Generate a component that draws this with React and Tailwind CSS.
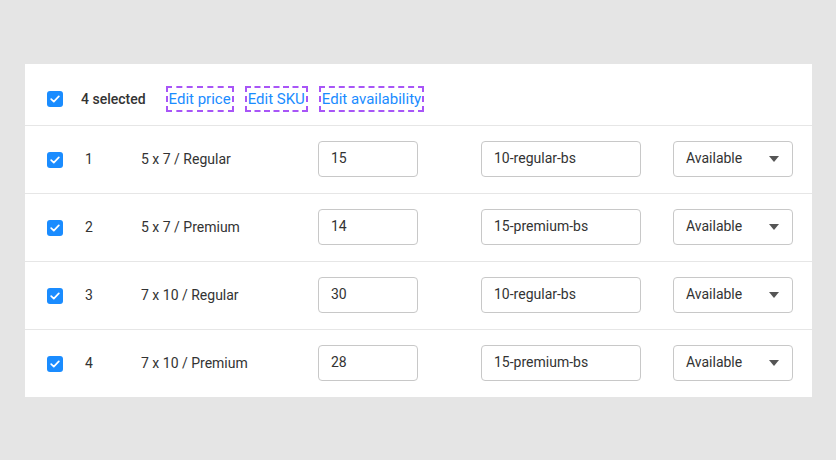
const rows = [
  { id: 1, name: "5 x 7 / Regular", price: "15", sku: "10-regular-bs" },
  { id: 2, name: "5 x 7 / Premium", price: "14", sku: "15-premium-bs" },
  { id: 3, name: "7 x 10 / Regular", price: "30", sku: "10-regular-bs" },
  { id: 4, name: "7 x 10 / Premium", price: "28", sku: "15-premium-bs" },
];

function Check() {
  return (
    <span className="w-4 h-4 rounded-[3px] bg-[#1a8cff] flex items-center justify-center shrink-0">
      <svg width="10" height="8" viewBox="0 0 10 8" fill="none">
        <path d="M1.2 4.2 L3.8 6.6 L8.8 1.4" stroke="white" strokeWidth="1.7" strokeLinecap="round" strokeLinejoin="round" />
      </svg>
    </span>
  );
}

function ActionButton({ children }) {
  return (
    <button className="h-[26px] px-[3px] outline-2 outline-dashed outline-[#a855f7] -outline-offset-2 text-[#1a8cff] text-[15px] leading-none">
      {children}
    </button>
  );
}

export default function App() {
  return (
    <div className="min-h-[460px] bg-[#e5e5e5] pt-16 pl-[25px] pr-6" style={{ fontFamily: "Roboto, 'Liberation Sans', sans-serif" }}>
      <div className="w-[787px] bg-white">
        <div className="h-[62px] flex items-center pt-[9px] pl-[22px] border-b border-[#e6e6e6]">
          <Check />
          <span className="ml-[18px] text-[14px] font-medium text-[#333]">4 selected</span>
          <div className="ml-[20px] flex items-center gap-[11px]">
            <ActionButton>Edit price</ActionButton>
            <ActionButton>Edit SKU</ActionButton>
            <ActionButton>Edit availability</ActionButton>
          </div>
        </div>
        {rows.map((r, i) => (
          <div
            key={r.id}
            className={
              "flex items-center pl-[22px] text-[14px] text-[#333] " +
              (i < rows.length - 1 ? "h-[68px] border-b border-[#e6e6e6]" : "h-[67px]")
            }
          >
            <Check />
            <span className="ml-[22px] w-[56px]">{r.id}</span>
            <span className="w-[177px]">{r.name}</span>
            <div className="mb-[2px] w-[100px] h-9 border border-[#c8c8c8] rounded-[4px] flex items-center px-3">{r.price}</div>
            <div className="mb-[2px] ml-[63px] w-[160px] h-9 border border-[#c8c8c8] rounded-[4px] flex items-center px-3">{r.sku}</div>
            <div className="mb-[2px] ml-[32px] w-[120px] h-9 border border-[#c8c8c8] rounded-[4px] flex items-center justify-between pl-3 pr-[13px]">
              <span>Available</span>
              <svg width="10" height="6" viewBox="0 0 10 6">
                <path d="M0 0 H10 L5 6 Z" fill="#555" />
              </svg>
            </div>
          </div>
        ))}
      </div>
    </div>
  );
}
